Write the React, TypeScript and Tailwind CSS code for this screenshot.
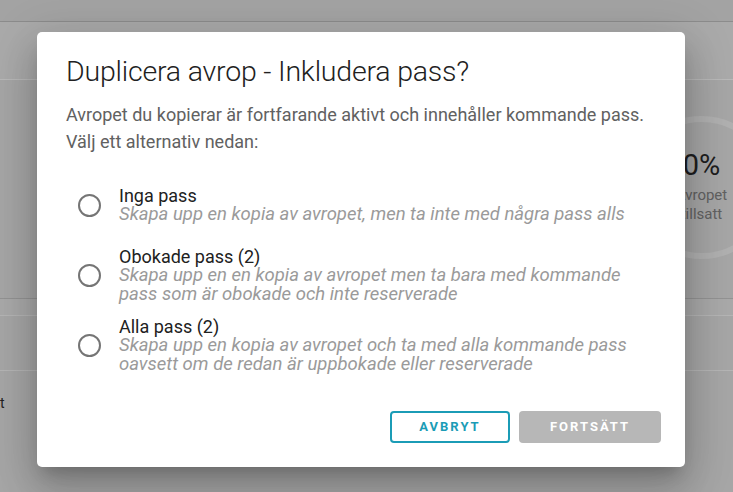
import React from 'react'

const options = [
  {
    id: 'none',
    label: 'Inga pass',
    desc: ['Skapa upp en kopia av avropet, men ta inte med några pass alls'],
    mt: 'mt-0',
  },
  {
    id: 'unbooked',
    label: 'Obokade pass (2)',
    desc: [
      'Skapa upp en en kopia av avropet men ta bara med kommande',
      'pass som är obokade och inte reserverade',
    ],
    mt: 'mt-[23px]',
  },
  {
    id: 'all',
    label: 'Alla pass (2)',
    desc: [
      'Skapa upp en kopia av avropet och ta med alla kommande pass',
      'oavsett om de redan är uppbokade eller reserverade',
    ],
    mt: 'mt-[13px]',
  },
]

const Background: React.FC = () => (
  <div className="flex flex-col w-full h-full bg-[#a6a6a6]">
    <div className="h-[22px] bg-[#a3a3a3] border-b border-[#8c8c8c]" />
    <div className="h-[58px] bg-[#aaaaaa] border-b border-[#b9b9b9]" />
    <div className="h-[218px] flex justify-end">
      <div className="mt-[36px] -mr-[40px] w-[143px] h-[143px] rounded-full border-[6px] border-[#b0b0b0] flex flex-col items-center justify-center">
        <span className="text-[29px] leading-none text-[#1e1e1e]">0%</span>
        <span className="mt-[6px] text-[15px] leading-[19px] text-[#616161] text-center">
          Avropet
          <br />
          tillsatt
        </span>
      </div>
    </div>
    <div className="h-[17px] bg-[#a9a9a9] border-t border-[#939393]" />
    <div className="h-[56px] bg-[#a6a6a6] border-t border-[#b5b5b5] border-b border-[#999999]" />
    <div className="pt-[22px] pl-0 text-[14px] text-[#222]">t</div>
  </div>
)

const Radio: React.FC = () => (
  <span className="shrink-0 w-[23px] h-[23px] rounded-full border-2 border-[#757575]" />
)

export default function App() {
  return (
    <div
      className="relative w-[733px] h-[492px] overflow-hidden"
      style={{ fontFamily: 'Roboto, "Liberation Sans", sans-serif' }}
    >
      <Background />
      <div className="absolute left-[37px] top-[32px] w-[648px] h-[435px] bg-white rounded-[5px] shadow-[0_11px_15px_-7px_rgba(0,0,0,0.2),0_24px_38px_3px_rgba(0,0,0,0.14),0_9px_46px_8px_rgba(0,0,0,0.12)] flex flex-col">
        <h2 className="pl-[29px] pt-[23px] text-[28.5px] leading-[34px] font-light text-[#212121] tracking-[-0.2px]">
          Duplicera avrop - Inkludera pass?
        </h2>
        <p className="pl-[29px] pt-[12px] pr-[10px] text-[18px] leading-[27px] text-[#616161]">
          Avropet du kopierar är fortfarande aktivt och innehåller kommande pass.
          <br />
          Välj ett alternativ nedan:
        </p>
        <div className="flex flex-col pl-[41px] pt-[31px]">
          {options.map((o) => (
            <label key={o.id} className={`flex items-center gap-[18px] ${o.mt}`}>
              <Radio />
              <div className="flex flex-col">
                <span className="text-[18px] leading-[19px] text-[#212121]">{o.label}</span>
                <span className="text-[18.5px] leading-[19px] italic text-[#9a9a9a]">
                  {o.desc.map((d, i) => (
                    <React.Fragment key={i}>
                      {i > 0 && <br />}
                      {d}
                    </React.Fragment>
                  ))}
                </span>
              </div>
            </label>
          ))}
        </div>
        <div className="mt-auto mb-[24px] mr-[24px] flex justify-end gap-[9px]">
          <button className="w-[120px] h-[32px] rounded-[4px] border-2 border-[#1b9cb6] text-[#1b9cb6] text-[13px] font-bold tracking-[2px] flex items-center justify-center">
            AVBRYT
          </button>
          <button className="w-[142px] h-[32px] rounded-[4px] bg-[#b7b7b7] text-white text-[13px] font-bold tracking-[2px] flex items-center justify-center">
            FORTSÄTT
          </button>
        </div>
      </div>
    </div>
  )
}
